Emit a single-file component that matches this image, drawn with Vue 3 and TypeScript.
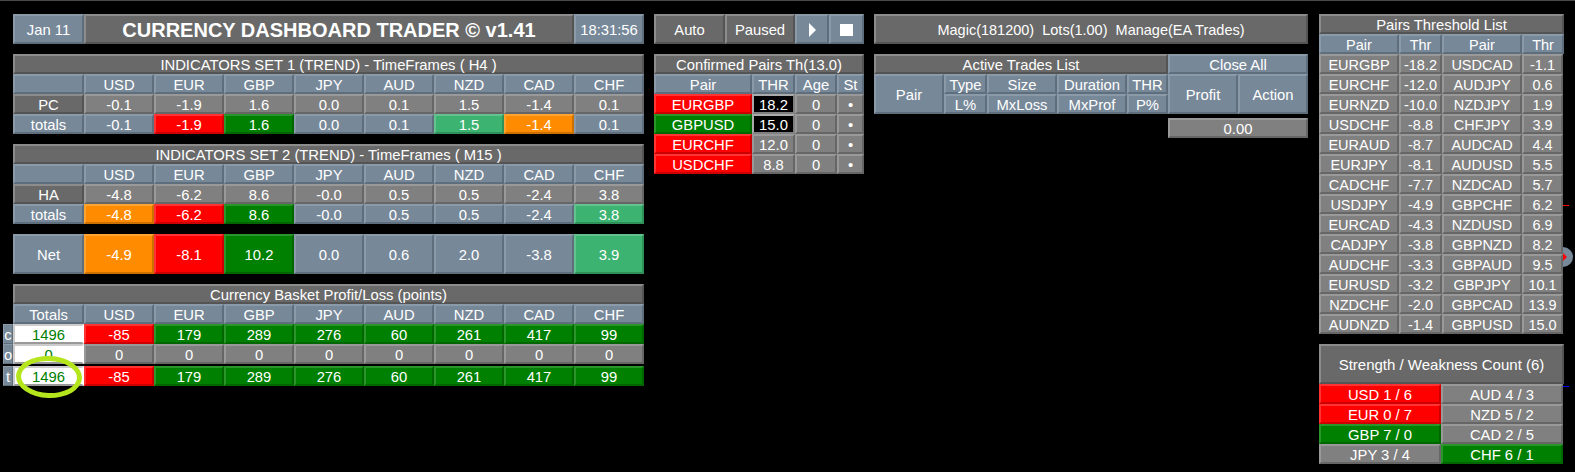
<script setup lang="ts">
const ccy = ['USD', 'EUR', 'GBP', 'JPY', 'AUD', 'NZD', 'CAD', 'CHF']
type Cell = [string, string]
const g = 'gray', s = 'slate', r = 'red', n = 'green', o = 'orange', m = 'sea'
const set1Vals = ['-0.1', '-1.9', '1.6', '0.0', '0.1', '1.5', '-1.4', '0.1']
const set1Cols = [s, r, n, s, s, m, o, s]
const set2Vals = ['-4.8', '-6.2', '8.6', '-0.0', '0.5', '0.5', '-2.4', '3.8']
const set2Cols = [o, r, n, s, s, s, s, m]
const net: Cell[] = [['-4.9', o], ['-8.1', r], ['10.2', n], ['0.0', s], ['0.6', s], ['2.0', s], ['-3.8', s], ['3.9', m]]
const sets = [
  { title: 'INDICATORS SET 1 (TREND) - TimeFrames ( H4 )', label: 'PC', vals: set1Vals, cols: set1Cols },
  { title: 'INDICATORS SET 2 (TREND) - TimeFrames ( M15 )', label: 'HA', vals: set2Vals, cols: set2Cols },
]
const profit = ['-85', '179', '289', '276', '60', '261', '417', '99']
const confirmed = [
  { p: 'EURGBP', c: r, t: '18.2', hot: true },
  { p: 'GBPUSD', c: n, t: '15.0', hot: true },
  { p: 'EURCHF', c: r, t: '12.0', hot: false },
  { p: 'USDCHF', c: r, t: '8.8', hot: false },
]
const thresholds = [
  ['EURGBP', '-18.2', 'USDCAD', '-1.1'], ['EURCHF', '-12.0', 'AUDJPY', '0.6'],
  ['EURNZD', '-10.0', 'NZDJPY', '1.9'], ['USDCHF', '-8.8', 'CHFJPY', '3.9'],
  ['EURAUD', '-8.7', 'AUDCAD', '4.4'], ['EURJPY', '-8.1', 'AUDUSD', '5.5'],
  ['CADCHF', '-7.7', 'NZDCAD', '5.7'], ['USDJPY', '-4.9', 'GBPCHF', '6.2'],
  ['EURCAD', '-4.3', 'NZDUSD', '6.9'], ['CADJPY', '-3.8', 'GBPNZD', '8.2'],
  ['AUDCHF', '-3.3', 'GBPAUD', '9.5'], ['EURUSD', '-3.2', 'GBPJPY', '10.1'],
  ['NZDCHF', '-2.0', 'GBPCAD', '13.9'], ['AUDNZD', '-1.4', 'GBPUSD', '15.0'],
]
const strength: Cell[] = [
  ['USD 1 / 6', r], ['AUD 4 / 3', g], ['EUR 0 / 7', r], ['NZD 5 / 2', g],
  ['GBP 7 / 0', n], ['CAD 2 / 5', g], ['JPY 3 / 4', g], ['CHF 6 / 1', n],
]
</script>

<template>
  <div class="page">
    <section class="left">
      <div class="ind topbar">
        <div class="c slate">Jan 11</div>
        <div class="c dim brand">CURRENCY DASHBOARD TRADER © v1.41</div>
        <div class="c slate">18:31:56</div>
      </div>

      <div v-for="set in sets" :key="set.label" class="ind block">
        <div class="c dim full">{{ set.title }}</div>
        <div class="c slate"></div>
        <div v-for="h in ccy" :key="h" class="c slate">{{ h }}</div>
        <div class="c dim">{{ set.label }}</div>
        <div v-for="(v, i) in set.vals" :key="i" class="c gray">{{ v }}</div>
        <div class="c slate">totals</div>
        <div v-for="(v, i) in set.vals" :key="i" class="c" :class="set.cols[i]">{{ v }}</div>
      </div>

      <div class="ind block net">
        <div class="c slate">Net</div>
        <div v-for="(v, i) in net" :key="i" class="c" :class="v[1]">{{ v[0] }}</div>
      </div>

      <div class="basket">
        <div class="ind">
          <div class="c dim full">Currency Basket Profit/Loss (points)</div>
          <div class="c slate">Totals</div>
          <div v-for="h in ccy" :key="h" class="c slate">{{ h }}</div>
        </div>
        <div class="brow">
          <div class="c slate tag">c</div>
          <div class="c white">1496</div>
          <div v-for="(v, i) in profit" :key="i" class="c" :class="i === 0 ? 'red' : 'green'">{{ v }}</div>
        </div>
        <div class="brow">
          <div class="c slate tag">o</div>
          <div class="c white">0</div>
          <div v-for="i in 8" :key="i" class="c gray">0</div>
        </div>
        <div class="brow last">
          <div class="c slate tag">t</div>
          <div class="c white">1496</div>
          <div v-for="(v, i) in profit" :key="i" class="c" :class="i === 0 ? 'red' : 'green'">{{ v }}</div>
        </div>
        <div class="ring"></div>
      </div>
    </section>

    <section class="mid">
      <div class="controls">
        <div class="c dim">Auto</div>
        <div class="c dim">Paused</div>
        <div class="c slate"><span class="play"></span></div>
        <div class="c slate"><span class="stop"></span></div>
      </div>
      <div class="confirmed">
        <div class="c dim full">Confirmed Pairs Th(13.0)</div>
        <div class="c slate">Pair</div>
        <div class="c slate">THR</div>
        <div class="c slate">Age</div>
        <div class="c slate">St</div>
        <template v-for="row in confirmed" :key="row.p">
          <div class="c" :class="row.c">{{ row.p }}</div>
          <div class="c" :class="row.hot ? 'black' : 'gray'">{{ row.t }}</div>
          <div class="c gray">0</div>
          <div class="c gray">•</div>
        </template>
      </div>
    </section>

    <section class="trades">
      <div class="c dim magic">Magic(181200)&nbsp; Lots(1.00)&nbsp; Manage(EA Trades)</div>
      <div class="tgrid">
        <div class="c dim atitle">Active Trades List</div>
        <div class="c slate aclose">Close All</div>
        <div class="c slate tall">Pair</div>
        <div class="c slate">Type</div>
        <div class="c slate">Size</div>
        <div class="c slate">Duration</div>
        <div class="c slate">THR</div>
        <div class="c slate tall">Profit</div>
        <div class="c slate tall">Action</div>
        <div class="c slate">L%</div>
        <div class="c slate">MxLoss</div>
        <div class="c slate">MxProf</div>
        <div class="c slate">P%</div>
      </div>
      <div class="sumrow"><div class="c gray sum">0.00</div></div>
    </section>

    <section class="right">
      <div class="thr">
        <div class="c dim full over">Pairs Threshold List</div>
        <div class="c slate">Pair</div>
        <div class="c slate">Thr</div>
        <div class="c slate">Pair</div>
        <div class="c slate over">Thr</div>
        <template v-for="row in thresholds" :key="row[0]">
          <div v-for="(v, i) in row" :key="i" class="c gray">{{ v }}</div>
        </template>
      </div>
      <div class="str">
        <div class="c dim strhead over">Strength / Weakness Count (6)</div>
        <div v-for="v in strength" :key="v[0]" class="c" :class="v[1]">{{ v[0] }}</div>
      </div>
    </section>

    <i class="tick redt"></i>
    <i class="tick bluet"></i>
    <div class="handle"><i></i></div>
  </div>
</template>

<style scoped>
.page {
  position: relative;
  box-sizing: border-box;
  width: 1575px;
  height: 472px;
  overflow: hidden;
  background: #000;
  border-top: 1px solid #4a4a4a;
  padding: 13px 0 0 3px;
  display: flex;
  align-items: flex-start;
  font: 14.8px "Liberation Sans", Arial, sans-serif;
  color: #fff;
}
.c {
  box-sizing: border-box;
  height: 20px;
  min-width: 0;
  border: 2px solid;
  padding-top: 1px;
  display: flex;
  align-items: center;
  justify-content: center;
  white-space: nowrap;
  line-height: 16px;
}
.slate { background: #778899; border-color: #8b9aa8 #5f6e7c #5f6e7c #8b9aa8; }
.dim { background: #696969; border-color: #8c8c8c #545454 #545454 #8c8c8c; }
.gray { background: #808080; border-color: #999 #666 #666 #999; }
.red { background: #f00; border-color: #f33 #c00 #c00 #f33; }
.green { background: #008000; border-color: #2a952a #006600 #006600 #2a952a; }
.orange { background: #ff8c00; border-color: #ffa333 #cc7000 #cc7000 #ffa333; }
.sea { background: #3cb371; border-color: #63c28d #30905a #30905a #63c28d; }
.white { background: #fff; color: #008000; border-color: #ccc #fff #999 #ccc; }
.black { background: #000; border-color: #aaa #808080 #808080 #aaa; }

.left { width: 641px; margin-right: 10px; flex: none; }
.ind, .block {
  display: grid;
  grid-template-columns: 71px repeat(8, 70px);
  margin-left: 10px;
}
.full { grid-column: 1 / -1; }
.topbar { grid-template-columns: 71px 490px 70px; height: 30px; }
.topbar .c { height: 30px; }
.brand { font-size: 20px; font-weight: bold; }
.block { margin-top: 10px; }
.net .c { height: 40px; }

.basket { position: relative; margin-top: 10px; }
.brow {
  display: grid;
  grid-template-columns: 10px 71px repeat(8, 70px);
}
.brow.last { margin-top: 2px; }
.tag { border-width: 1px; }
.ring {
  position: absolute;
  left: 13px;
  top: 72px;
  width: 66px;
  height: 42px;
  box-sizing: border-box;
  border: 5px solid #b5e61d;
  border-radius: 50%;
  transform: rotate(2deg);
}

.mid { width: 210px; margin-right: 10px; flex: none; }
.controls {
  display: grid;
  grid-template-columns: 71px 70px 34px 35px;
}
.controls .c { height: 30px; }
.play {
  width: 0;
  height: 0;
  border-left: 7px solid #fff;
  border-top: 7px solid transparent;
  border-bottom: 7px solid transparent;
}
.stop { width: 13px; height: 12px; background: #fff; }
.confirmed {
  display: grid;
  grid-template-columns: 98px 43px 42px 27px;
  margin-top: 10px;
}

.trades { width: 434px; margin-right: 11px; flex: none; }
.magic { height: 30px; font-size: 14.5px; }
.tgrid {
  display: grid;
  grid-template-columns: 70px 43px 70px 70px 41px 70px 70px;
  grid-template-rows: 20px 20px 20px;
  margin-top: 10px;
}
.atitle { grid-column: 1 / 6; }
.aclose { grid-column: 6 / 8; }
.tall { grid-row: span 2; height: 40px; }
.sumrow { display: flex; justify-content: flex-end; margin-top: 4px; }
.sum { width: 140px; }

.right { width: 245px; flex: none; position: relative; z-index: 1; }
.thr {
  display: grid;
  grid-template-columns: 80px 43px 80px 41px;
  font-size: 14.5px;
}
.thr .full { font-size: 14.8px; }
.over { margin-right: -1px; }
.str {
  display: grid;
  grid-template-columns: 122px 122px;
  margin-top: 10px;
}
.strhead { grid-column: 1 / -1; height: 40px; font-size: 15px; }

.tick { position: absolute; left: 1563px; width: 6px; height: 1px; }
.redt { top: 204px; background: #f00; }
.bluet { top: 385px; background: #00f; }
.handle {
  position: absolute;
  left: 1553px;
  top: 246px;
  width: 20px;
  height: 20px;
  border-radius: 50%;
  background: #778899;
}
.handle i {
  position: absolute;
  left: 10px;
  top: 6px;
  width: 0;
  height: 0;
  border-left: 4px solid #f00;
  border-top: 4px solid transparent;
  border-bottom: 4px solid transparent;
}
</style>
